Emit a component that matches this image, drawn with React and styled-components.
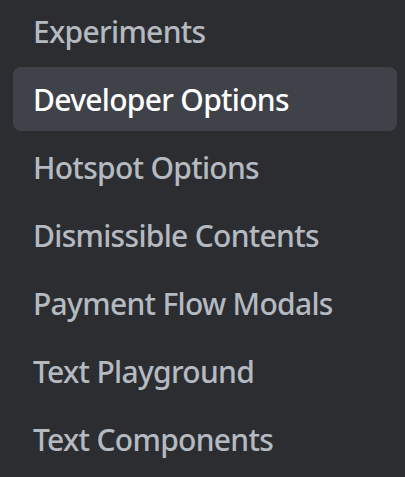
import React, { useState } from "react"
import styled, { createGlobalStyle } from "styled-components"

const GlobalStyle = createGlobalStyle`
  html, body {
    margin: 0;
    padding: 0;
    background: #2b2d31;
  }
`

const items = [
  "Experiments",
  "Developer Options",
  "Hotspot Options",
  "Dismissible Contents",
  "Payment Flow Modals",
  "Text Playground",
  "Text Components"
]

const Sidebar = styled.nav`
  height: 477px;
  background: #2b2d31;
  padding: 0 8px 0 13px;
  box-sizing: border-box;
  overflow: hidden;
`

const List = styled.ul`
  list-style: none;
  margin: -1px 0 0;
  padding: 0;
  display: flex;
  flex-direction: column;
  gap: 4px;
`

const Item = styled.li`
  height: 64px;
  display: flex;
  align-items: center;
  padding: 0 20px;
  border-radius: 8px;
  font-family: "Noto Sans", "Open Sans", sans-serif;
  font-size: 30px;
  font-weight: 500;
  letter-spacing: -0.7px;
  white-space: nowrap;
  cursor: pointer;
  color: ${(props) => (props.$active ? "#ffffff" : "#b5bac1")};
  background: ${(props) => (props.$active ? "#404249" : "transparent")};
`

const App = () => {
  const [active, setActive] = useState("Developer Options")

  return (
    <>
      <GlobalStyle />
      <Sidebar>
        <List>
          {items.map((item) => (
            <Item key={item} $active={item === active} onClick={() => setActive(item)}>
              {item}
            </Item>
          ))}
        </List>
      </Sidebar>
    </>
  )
}

export default App
